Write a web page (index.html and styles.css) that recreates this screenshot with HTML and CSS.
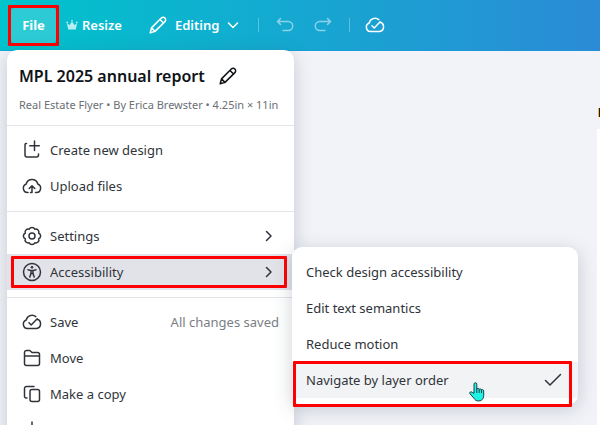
FILE: index.html
```html
<!DOCTYPE html>
<html lang="en">

<head>
    <meta charset="utf-8">
    <title>MPL 2025 annual report</title>
    <link rel="stylesheet" href="styles.css">
</head>

<body>
    <!-- shared icons -->
    <svg class="sprite">
        <symbol id="pencil" viewBox="0 0 18 18">
            <path d="M1.2 16.8l1.3-4.9L12.3 2a2.2 2.2 0 0 1 3.6 3.6L6 15.4z M11 3.5l3.5 3.5 M2.5 11.9L6 15.4"/>
        </symbol>
        <symbol id="cloud-check" viewBox="0 0 20 20">
            <path d="M5.5 16.5a4.4 4.4 0 0 1-1.3-8.5 6 6 0 0 1 9.6-3.4 M15.2 7.2a4.8 4.8 0 0 1-.6 9.3H5.5 M7 10.8l2.2 2.2 6-6.3"/>
        </symbol>
        <symbol id="chevron" viewBox="0 0 12 12">
            <path d="M3.5 1.5L8 6l-4.5 4.5"/>
        </symbol>
    </svg>

    <header class="topbar">
        <div class="file">
            <button class="file-btn">File</button>
        </div>
        <button class="bar-btn resize">
            <svg class="crown" viewBox="0 0 12 12"><path d="M1 4.5L3.5 6 6 2.5 8.5 6 11 4.5l-1.2 6H2.2z"/><circle cx="1.2" cy="3.5" r=".9"/><circle cx="6" cy="1.8" r=".9"/><circle cx="10.8" cy="3.5" r=".9"/></svg>
            Resize
        </button>
        <button class="bar-btn editing">
            <svg class="icon" viewBox="0 0 18 18"><use href="#pencil"/></svg>
            Editing
            <svg class="arrow" viewBox="0 0 12 12"><path d="M1.5 4L6 8.5 10.5 4"/></svg>
        </button>
        <span class="sep"></span>
        <button class="bar-btn faded" aria-label="Undo">
            <svg class="icon" viewBox="0 0 18 18"><path d="M4.5 2.5l-3 3 3 3 M1.5 5.5h10.7a4.5 4.5 0 0 1 0 9H7"/></svg>
        </button>
        <button class="bar-btn faded" aria-label="Redo">
            <svg class="icon" viewBox="0 0 18 18"><path d="M13.5 2.5l3 3-3 3 M16.5 5.5H5.8a4.5 4.5 0 0 0 0 9H11"/></svg>
        </button>
        <span class="sep"></span>
        <button class="bar-btn cloud" aria-label="Saved">
            <svg class="icon-big" viewBox="0 0 20 20"><use href="#cloud-check"/></svg>
        </button>
    </header>

    <main class="canvas">
        <div class="page">
            <span class="page-mark"></span>
            <div class="sheet"></div>
        </div>
    </main>

    <!-- File menu -->
    <nav class="menu">
        <div class="menu-head">
            <h1>MPL 2025 annual report
                <button class="rename" aria-label="Rename"><svg class="icon" viewBox="0 0 18 18"><use href="#pencil"/></svg></button>
            </h1>
            <p>Real Estate Flyer • By Erica Brewster • 4.25in × 11in</p>
        </div>
        <div class="group">
            <button class="item">
                <svg class="icon-big" viewBox="0 0 20 20"><path d="M4.5 3.5H4a1 1 0 0 0-1 1V15a2 2 0 0 0 2 2h9.5a2 2 0 0 0 2-2v-1 M12.5 1v9.5 M7.8 5.7h9.5"/></svg>
                Create new design
            </button>
            <button class="item">
                <svg class="icon-big" viewBox="0 0 20 20"><path d="M6 16.5h-.5a4.4 4.4 0 0 1-1.3-8.5 6 6 0 0 1 11.6 0 4.4 4.4 0 0 1-1.3 8.5h-1 M8.5 16.5H10V10 M7.2 12.5L10 9.7l2.8 2.8"/></svg>
                Upload files
            </button>
        </div>
        <div class="group">
            <button class="item">
                <svg class="icon-big" viewBox="0 0 20 20"><path d="M7.2 3.3a3 3 0 0 1 5.6 0 3 3 0 0 1 3.9 3.9 3 3 0 0 1 0 5.6 3 3 0 0 1-3.9 3.9 3 3 0 0 1-5.6 0 3 3 0 0 1-3.9-3.9 3 3 0 0 1 0-5.6 3 3 0 0 1 3.9-3.9z"/><circle cx="10" cy="10" r="3"/></svg>
                Settings
                <svg class="arrow" viewBox="0 0 12 12"><use href="#chevron"/></svg>
            </button>
            <button class="item active">
                <svg class="icon-big" viewBox="0 0 20 20"><circle cx="10" cy="10" r="8.5"/><circle class="solid" cx="10" cy="5.2" r="1.3"/><path d="M6 7.8l3 .8v2.8L7.8 15 M14 7.8l-3 .8v2.8l1.2 3.6 M9 8.6h2v2.8H9z"/></svg>
                Accessibility
                <svg class="arrow" viewBox="0 0 12 12"><use href="#chevron"/></svg>
            </button>
        </div>
        <div class="group">
            <button class="item">
                <svg class="icon-big" viewBox="0 0 20 20"><use href="#cloud-check"/></svg>
                Save
                <span class="note">All changes saved</span>
            </button>
            <button class="item">
                <svg class="icon-big" viewBox="0 0 20 20"><path d="M2.5 8V4.500a2 2 0 0 1 2-2h3.300l2.200 2h5.500a2 2 0 0 1 2 2v9a2 2 0 0 1-2 2h-11a2 2 0 0 1-2-2V8h15"/></svg>
                Move
            </button>
            <button class="item">
                <svg class="icon-big" viewBox="0 0 20 20"><rect x="8" y="5.5" width="9.5" height="12" rx="2"/><path d="M5 14H4a1.500 1.500 0 0 1-1.500-1.500v-8a2 2 0 0 1 2-2H12"/></svg>
                Make a copy
            </button>
            <button class="item">
                <svg class="icon-big" viewBox="0 0 20 20"><path d="M10 2v11 M6 9.5l4 4 4-4 M3 14v1.500a2 2 0 0 0 2 2h10a2 2 0 0 0 2-2V14"/></svg>
                Download
            </button>
        </div>
    </nav>

    <!-- Accessibility submenu -->
    <div class="submenu">
        <button class="item">Check design accessibility</button>
        <button class="item">Edit text semantics</button>
        <button class="item">Reduce motion</button>
        <button class="item hover">
            Navigate by layer order
            <svg class="check" viewBox="0 0 18 18"><path d="M1.5 9.5L6 14 16.5 3.5"/></svg>
            <svg class="hand" viewBox="0 0 16 20"><path d="M5 11V2.200a1.400 1.400 0 0 1 2.800 0V7a1.300 1.300 0 0 1 2.400.4 1.300 1.300 0 0 1 2.300.6 1.300 1.300 0 0 1 2.200 1v4.500c0 3-1.800 5.500-5 5.500-2.500 0-3.700-1-4.900-2.900L1 11.700c-.8-1.500.8-2.600 2-1.600z"/><path d="M7.800 7v3.500 M10.200 7.500v3 M12.500 8.200v2.500"/></svg>
        </button>
    </div>
</body>

</html>
```
FILE: styles.css
```css
* {
    box-sizing: border-box;
}

body {
    margin: 0;
    height: 100vh;
    display: flex;
    flex-direction: column;
    position: relative;
    overflow: hidden;
    background: #f2f3f8;
    color: #0e1318;
    font-family: "Noto Sans", sans-serif;
    font-size: 13px;
}

button {
    border: 0;
    padding: 0;
    background: none;
    color: inherit;
    font: inherit;
    cursor: pointer;
}

svg {
    flex: none;
    fill: none;
    stroke: currentColor;
    stroke-width: 1.5;
    stroke-linecap: round;
    stroke-linejoin: round;
}

.sprite {
    position: absolute;
    width: 0;
    height: 0;
}

.icon {
    width: 18px;
    height: 18px;
}

.icon-big {
    width: 20px;
    height: 20px;
}

.arrow {
    width: 12px;
    height: 12px;
}

.solid {
    fill: currentColor;
    stroke: none;
}

/* top bar */
.topbar {
    flex: none;
    display: flex;
    align-items: center;
    height: 51px;
    padding-left: 8px;
    background: linear-gradient(to right, #00c4cc, #2b8bd6);
    border-bottom: 1px solid rgba(30, 150, 220, 0.5);
    color: #fff;
}

.file {
    border: 3px solid #f00;
    border-radius: 1px;
}

.file-btn {
    display: block;
    width: 45px;
    height: 35px;
    border-radius: 4px;
    background: rgba(255, 255, 255, 0.17);
    font-weight: 700;
}

.bar-btn {
    display: flex;
    align-items: center;
    font-weight: 600;
}

.resize {
    gap: 4px;
    margin-left: 7px;
}

.crown {
    width: 12px;
    height: 12px;
    fill: #b8eef2;
    stroke: none;
}

.editing {
    gap: 8px;
    margin: 0 19px 0 27px;
}

.sep {
    width: 1px;
    height: 14px;
    background: rgba(255, 255, 255, 0.3);
}

.faded {
    margin-left: 17px;
    opacity: 0.5;
}

.faded + .faded {
    margin: 0 17px 0 20px;
}

.cloud {
    margin-left: 15px;
}

/* page behind the menus */
.canvas {
    flex: 1;
    display: flex;
    justify-content: flex-end;
    padding-top: 57px;
}

.page {
    width: 3px;
    display: flex;
    flex-direction: column;
    align-items: flex-end;
    gap: 12px;
}

.page-mark {
    width: 2px;
    height: 9px;
    background: #2b1a10;
    border-left: 1px solid #f0b54a;
}

.sheet {
    flex: 1;
    width: 100%;
    background: #fff;
}

/* menus */
.menu {
    position: absolute;
    top: 50px;
    left: 7px;
    width: 287px;
    border-radius: 10px;
    background: #fff;
    box-shadow: 0 4px 18px rgba(57, 76, 96, 0.25);
}

.menu-head {
    height: 75px;
    padding: 14px 12px 0;
}

h1 {
    display: flex;
    align-items: center;
    gap: 14px;
    margin: 0;
    font-size: 16px;
    font-weight: 600;
    line-height: 24px;
}

.rename {
    display: flex;
}

p {
    margin: 8px 0 0;
    color: #6b6f76;
    font-size: 11px;
    line-height: 18px;
    white-space: nowrap;
}

.group {
    padding: 6px 0 7px;
    border-top: 1px solid #e2e4e8;
}

.item {
    position: relative;
    display: flex;
    align-items: center;
    gap: 8px;
    width: 100%;
    height: 36px;
    padding: 0 15px;
    color: #30343a;
    text-align: left;
    white-space: nowrap;
}

.item .arrow {
    margin: 0 4px 0 auto;
}

.note {
    margin-left: auto;
    color: #7b7e84;
}

.active {
    background: #e2e3e8;
}

/* red highlight frames */
.active::after,
.hover::after {
    content: "";
    position: absolute;
    border: 3px solid #f00;
    border-radius: 1px;
}

.active::after {
    inset: 2px 7px 2px 4px;
}

.submenu {
    position: absolute;
    top: 247px;
    left: 292px;
    width: 286px;
    padding: 7px 0;
    border-radius: 10px;
    background: #fff;
    box-shadow: 0 4px 18px rgba(57, 76, 96, 0.25);
}

.submenu .item {
    padding: 0 16px 0 14px;
}

.hover {
    background: #f2f3f5;
}

.hover::after {
    inset: -1px 6px -9px 1px;
}

.check {
    width: 18px;
    height: 18px;
    margin-left: auto;
}

.hand {
    position: absolute;
    top: 20px;
    left: 177px;
    width: 16px;
    height: 20px;
    fill: #1ff3e4;
    stroke: #1b3f4a;
    stroke-width: 1;
}
```
